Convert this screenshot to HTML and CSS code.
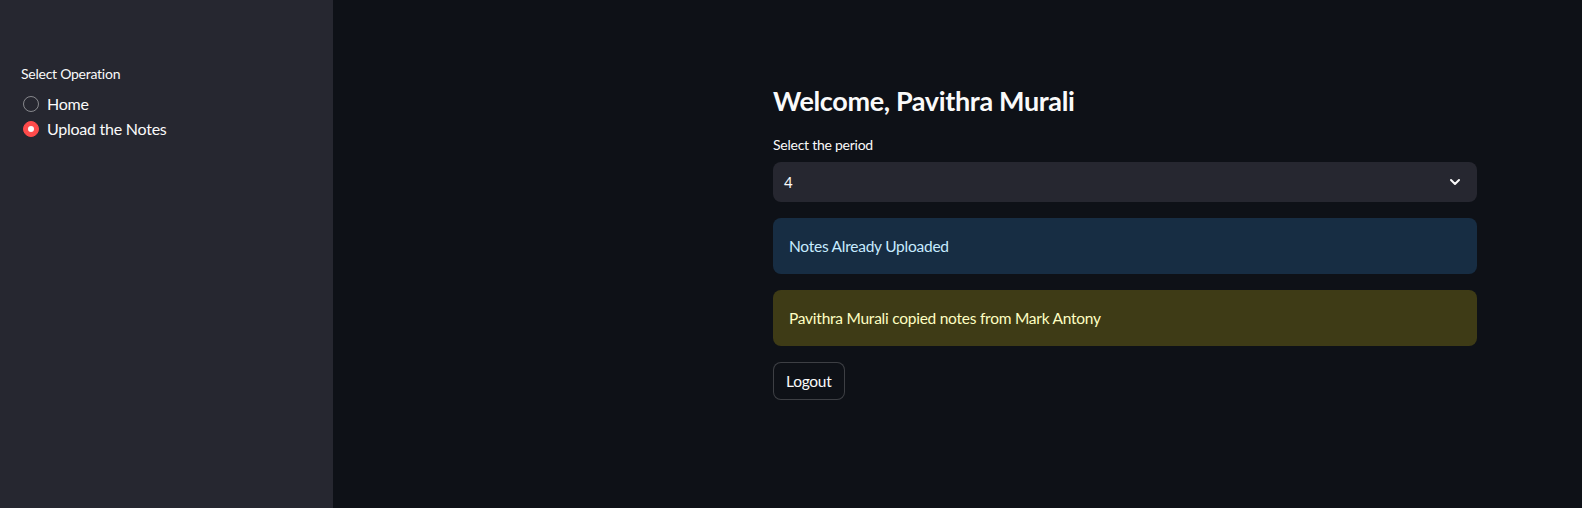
FILE: index.html
```html
<!DOCTYPE html>
<html>
<head>
<meta charset="utf-8">
<link rel="stylesheet" href="styles.css">
</head>
<body>
<div class="app">
  <aside class="sidebar">
    <div class="radio-group">
      <div class="label">Select Operation</div>
      <label class="radio"><span class="dot"></span><span>Home</span></label>
      <label class="radio"><span class="dot checked"></span><span>Upload the Notes</span></label>
    </div>
  </aside>
  <main class="main">
    <div class="block">
      <h3 class="title">Welcome, Pavithra Murali</h3>
      <div class="field">
        <div class="label">Select the period</div>
        <div class="select">
          <span>4</span>
          <svg class="chev" width="16" height="16" viewBox="0 0 24 24"><path d="M6 9l6 6 6-6" fill="none" stroke="#fafafa" stroke-width="3" stroke-linecap="round" stroke-linejoin="round"/></svg>
        </div>
      </div>
      <div class="alert info">Notes Already Uploaded</div>
      <div class="alert warn">Pavithra Murali copied notes from Mark Antony</div>
      <div><button class="btn">Logout</button></div>
    </div>
  </main>
</div>
</body>
</html>
```

FILE: styles.css
```css
* { box-sizing: border-box; }
html, body { margin: 0; padding: 0; height: 100%; }
body {
  font-family: "Lato", "Noto Sans", sans-serif;
  color: #fafafa;
  background: #0e1117;
  letter-spacing: -0.25px;
}
.app { display: flex; height: 508px; }
.sidebar {
  width: 333px;
  flex-shrink: 0;
  background: #262730;
  padding: 66px 21px 0 21px;
}
.label {
  font-size: 14px;
  line-height: 16px;
  color: #fafafa;
}
.radio-group .label { margin-bottom: 9px; }
.radio {
  display: flex;
  align-items: center;
  gap: 8px;
  font-size: 16px;
  line-height: 25px;
  padding-left: 2px;
}
.dot {
  width: 16px;
  height: 16px;
  border-radius: 50%;
  border: 1px solid rgba(250,250,250,0.45);
  position: relative;
}
.dot.checked {
  background: #ff4b4b;
  border-color: #ff4b4b;
}
.dot.checked::after {
  content: "";
  position: absolute;
  left: 4px; top: 4px;
  width: 6px; height: 6px;
  border-radius: 50%;
  background: #fafafa;
}
.main { flex: 1; padding: 84px 0 0 440px; }
.block { width: 704px; display: flex; flex-direction: column; gap: 16px; }
.title {
  margin: 0 0 3px 0;
  font-size: 27px;
  font-weight: 700;
  line-height: 34px;
  letter-spacing: -0.35px;
}
.field { display: flex; flex-direction: column; gap: 9px; }
.select {
  height: 40px;
  background: #262730;
  border-radius: 8px;
  display: flex;
  align-items: center;
  justify-content: space-between;
  padding: 0 14px 0 11px;
  font-size: 15px;
}
.alert {
  border-radius: 8px;
  padding: 16px;
  font-size: 15.5px;
  line-height: 24px;
}
.info { background: #172d43; color: #c7ebff; }
.warn { background: #3e3b16; color: #ffffc2; }
.btn {
  font-family: inherit;
  font-size: 15.5px;
  letter-spacing: inherit;
  color: #fafafa;
  background: #0e1117;
  border: 1px solid rgba(250,250,250,0.2);
  border-radius: 8px;
  height: 38px;
  padding: 0 12px;
}
```
